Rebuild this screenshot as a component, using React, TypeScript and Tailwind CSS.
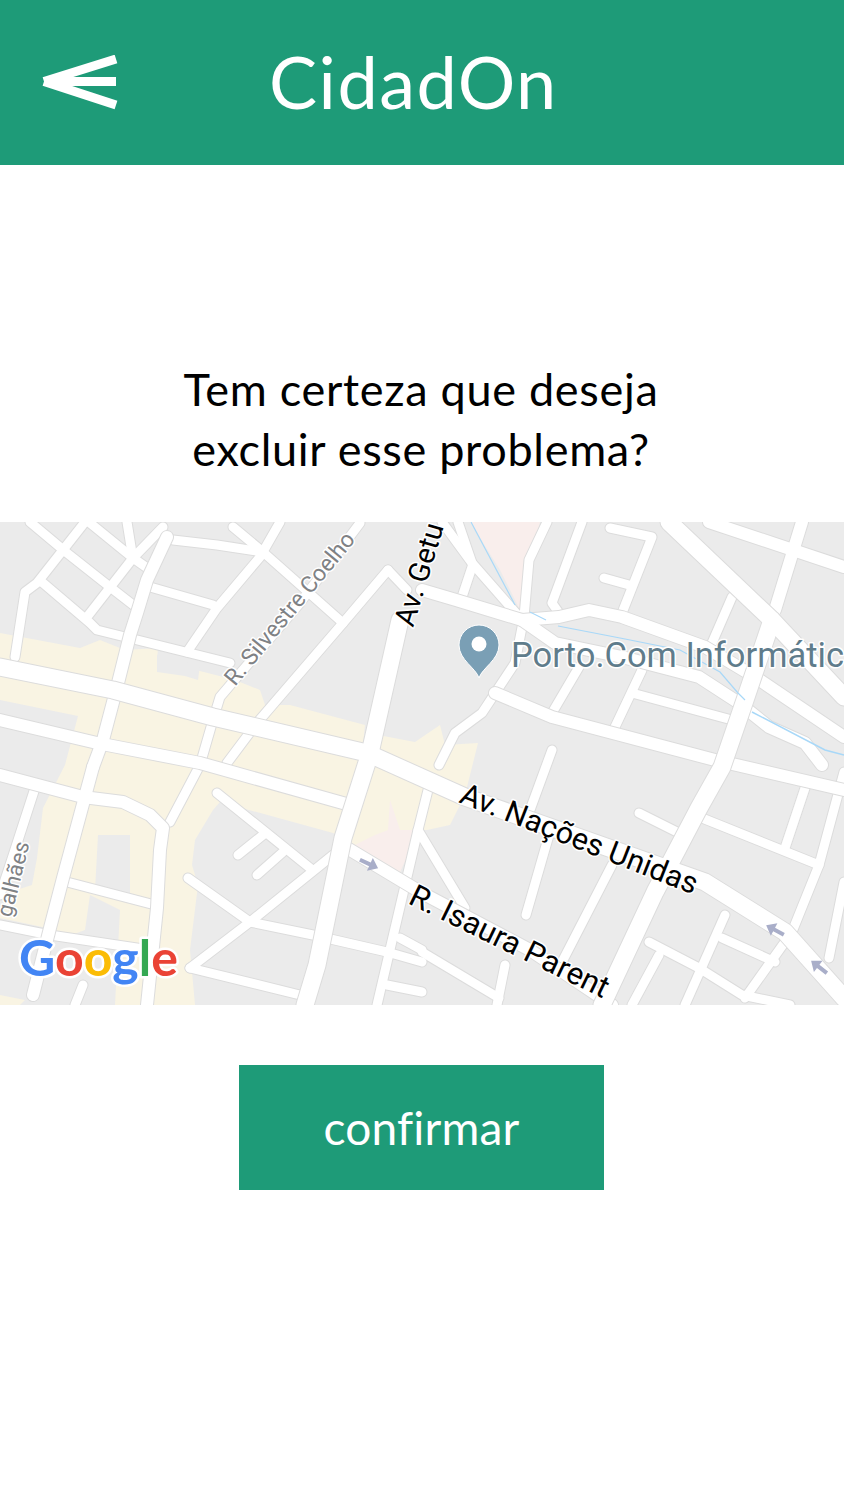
import React from 'react';

// roads in page coordinates, the map viewBox starts at y=522
const wide: string[] = [
  '0,667 113,690 213,717 367,753 465,797 705,882 785,932 844,998',
  '669,522 772,620 844,697',
  '772,620 745,700 722,767 699,808 655,892 602,1005',
  '400,620 370,753 343,838 317,965 305,1005',
];

const medium: string[] = [
  '0,720 97,743 200,763 350,805',
  '0,775 83,797 123,802 150,815 163,828 160,850 157,908 147,1005',
  '347,848 422,893 530,950 612,1005',
  '709,522 844,567',
  '802,522 775,610',
  '422,590 456,600 522,620 559,617 589,610 622,617 705,647 755,677 844,737',
  '522,620 555,643 622,657 699,677 739,703 769,727 805,743 822,765',
  '495,693 552,717 715,760 844,790',
  '93,767 63,878 50,928 33,995',
  '167,537 147,580 137,613 130,635 117,687 103,740 93,767',
];

const narrow: string[] = [
  '30,522 67,553 110,587 137,608',
  '90,523 133,558 150,570',
  '85,522 63,550 37,583 25,592 15,657',
  '43,583 90,623 97,630 230,663',
  '163,527 133,558 87,617',
  '173,540 217,545 263,552',
  '233,527 263,552 343,623',
  '280,522 260,557 217,608 187,652',
  '150,587 213,605',
  '360,523 300,603 243,670 220,697 213,720 200,765 170,822',
  '127,522 132,553',
  '388,570 343,623 257,723 227,763',
  '388,570 407,590',
  '442,522 472,563 522,620',
  '458,522 472,563',
  '472,567 462,597',
  '547,522 529,560 524,617 515,663 482,713 455,733 439,765',
  '582,522 552,603 559,613',
  '610,528 652,537 622,613',
  '604,578 629,585',
  '732,597 712,643',
  '579,667 552,713',
  '642,670 615,727',
  '632,693 732,720',
  '552,750 530,810',
  '549,835 526,915',
  '639,813 677,832',
  '612,865 562,962',
  '702,818 819,865',
  '805,788 785,848',
  '844,772 819,865 792,932 745,998',
  '844,882 829,958',
  '649,942 699,968 742,995 790,1005',
  '659,955 632,1005',
  '725,915 685,1005',
  '722,938 775,962',
  '422,952 499,998',
  '505,965 497,1005',
  '430,782 418,830 465,908',
  '217,793 310,868',
  '263,835 238,855',
  '283,852 257,875',
  '333,855 250,922 190,968',
  '188,878 250,922 313,935 387,952 422,962',
  '190,968 300,995',
  '67,882 155,905',
  '35,788 10,865 0,895',
  '0,925 50,935 150,950',
  '83,985 75,1005',
  '418,830 377,1005',
  '387,985 422,992',
  '400,938 422,950',
];

const Roads = ({ lines, width }: { lines: string[]; width: number }) => (
  <>
    {lines.map((p) => (
      <polyline key={p} points={p} fill="none" stroke="#dcdcdc" strokeWidth={width + 2} strokeLinecap="round" strokeLinejoin="round" />
    ))}
    {lines.map((p) => (
      <polyline key={p} points={p} fill="none" stroke="#ffffff" strokeWidth={width} strokeLinecap="round" strokeLinejoin="round" />
    ))}
  </>
);

const Arrow = ({ x, y, angle }: { x: number; y: number; angle: number }) => (
  <path transform={`translate(${x} ${y}) rotate(${angle})`} d="M-10 -2 H1 V-7 L10 0 L1 7 V2 H-10 Z" fill="#a9aec9" />
);

const StreetMap = () => (
  <svg viewBox="0 522 844 483" className="block w-full h-[483px]" style={{ fontFamily: 'Roboto, sans-serif' }}>
    <rect x="0" y="522" width="844" height="483" fill="#ebebeb" />
    {/* commercial area */}
    <polygon
      fill="#f9f4e3"
      points="0,633 80,648 100,640 125,650 158,648 157,660 235,680 260,690 265,705 290,705 365,725 363,745 378,735 415,742 440,725 445,745 478,743 465,795 450,825 427,830 415,830 400,872 355,845 333,833 220,802 213,810 195,840 192,865 198,885 190,950 195,1005 115,1005 120,910 90,895 85,930 58,940 47,928 0,918 0,910 10,892 32,885 37,858 43,808 65,765 78,716 0,700"
    />
    <polygon fill="#f9f4e3" points="75,800 150,815 155,905 60,890 70,830" />
    <polygon fill="#ebebeb" points="98,835 130,835 130,895 95,890" />
    <polygon fill="#ebebeb" points="157,655 200,665 198,680 185,676 157,672" />
    <polygon fill="#f9f4e3" points="0,995 25,1000 20,1005 0,1005" />
    <polygon fill="#f9eeec" points="355,845 375,835 388,830 390,800 400,830 420,830 400,872" />
    <polygon fill="#f9eeec" points="470,522 540,522 520,610 500,570" />
    <Roads lines={narrow} width={9} />
    <Roads lines={medium} width={12} />
    <Roads lines={wide} width={17} />
    {/* water */}
    <polyline points="471,522 515,605" fill="none" stroke="#a8d8f8" strokeWidth="1.2" />
    <polyline points="530,612 546,620" fill="none" stroke="#a8d8f8" strokeWidth="1.2" />
    <polyline points="558,626 620,638 680,650 720,672 738,693 745,700" fill="none" stroke="#a8d8f8" strokeWidth="1.2" />
    <polyline points="752,712 825,750 844,755" fill="none" stroke="#a8d8f8" strokeWidth="1.5" />
    {/* one way arrows */}
    <Arrow x={369} y={864} angle={25} />
    <Arrow x={775} y={930} angle={208} />
    <Arrow x={819} y={967} angle={218} />
    {/* labels */}
    <g stroke="#ffffff" strokeWidth="3" strokeLinejoin="round" style={{ paintOrder: 'stroke' }}>
      <text transform="translate(235 687) rotate(-50.5)" fontSize="23" fill="#7f8285">R. Silvestre Coelho</text>
      <text transform="translate(11 918) rotate(-76)" fontSize="22" fill="#7f8285">galhães</text>
      <text transform="translate(413 628) rotate(-73)" fontSize="29" fill="#000000">Av. Getu</text>
      <text transform="translate(458 802) rotate(21.5)" fontSize="30.5" fill="#000000">Av. Nações Unidas</text>
      <text transform="translate(407 903) rotate(26)" fontSize="31" fill="#000000">R. Isaura Parent</text>
      <text x="511" y="667" fontSize="34.5" fill="#5f7c8b">Porto.Com Informátic</text>
    </g>
    {/* place pin */}
    <path d="M479 678 C476 668 459 660 459 645 A20 20 0 0 1 499 645 C499 660 482 668 479 678 Z" fill="#7a9fb5" stroke="#ffffff" strokeWidth="1" />
    <circle cx="479" cy="644" r="7.5" fill="#ffffff" />
    {/* google logo */}
    <text x="19" y="976" fontSize="50" fontWeight="700" stroke="#ffffff" strokeWidth="5" strokeLinejoin="round" style={{ paintOrder: 'stroke', fontFamily: 'Lato, sans-serif' }}>
      <tspan fill="#4285f4">G</tspan>
      <tspan fill="#ea4335">o</tspan>
      <tspan fill="#fbbc05">o</tspan>
      <tspan fill="#4285f4">g</tspan>
      <tspan fill="#34a853">l</tspan>
      <tspan fill="#ea4335">e</tspan>
    </text>
  </svg>
);

const BackIcon = () => (
  <svg width="76" height="56" viewBox="0 0 76 56" fill="none" stroke="#ffffff" strokeWidth="9">
    <path d="M2 26.5 L74 4 M2 26.5 H74 M2 26.5 L74 50" />
  </svg>
);

export default function App() {
  return (
    <div className="w-[844px] h-[1500px] bg-white font-['Lato',sans-serif] text-black">
      <header className="h-[165px] bg-[#1e9b78] flex items-center text-white">
        <div className="ml-[42px] w-[227px]">
          <BackIcon />
        </div>
        <h1 className="text-[72px] font-normal leading-none tracking-[1.5px] -mt-[3px]">CidadOn</h1>
      </header>
      <p className="pt-[194px] pr-[2px] text-center text-[45px] leading-[60px] tracking-[0.7px]">
        Tem certeza que deseja
        <br />
        excluir esse problema?
      </p>
      <div className="mt-[43px]">
        <StreetMap />
      </div>
      <div className="mt-[60px] ml-[239px]">
        <button className="w-[365px] h-[125px] bg-[#1e9b78] text-white text-[46px] tracking-[0.2px]">confirmar</button>
      </div>
    </div>
  );
}
